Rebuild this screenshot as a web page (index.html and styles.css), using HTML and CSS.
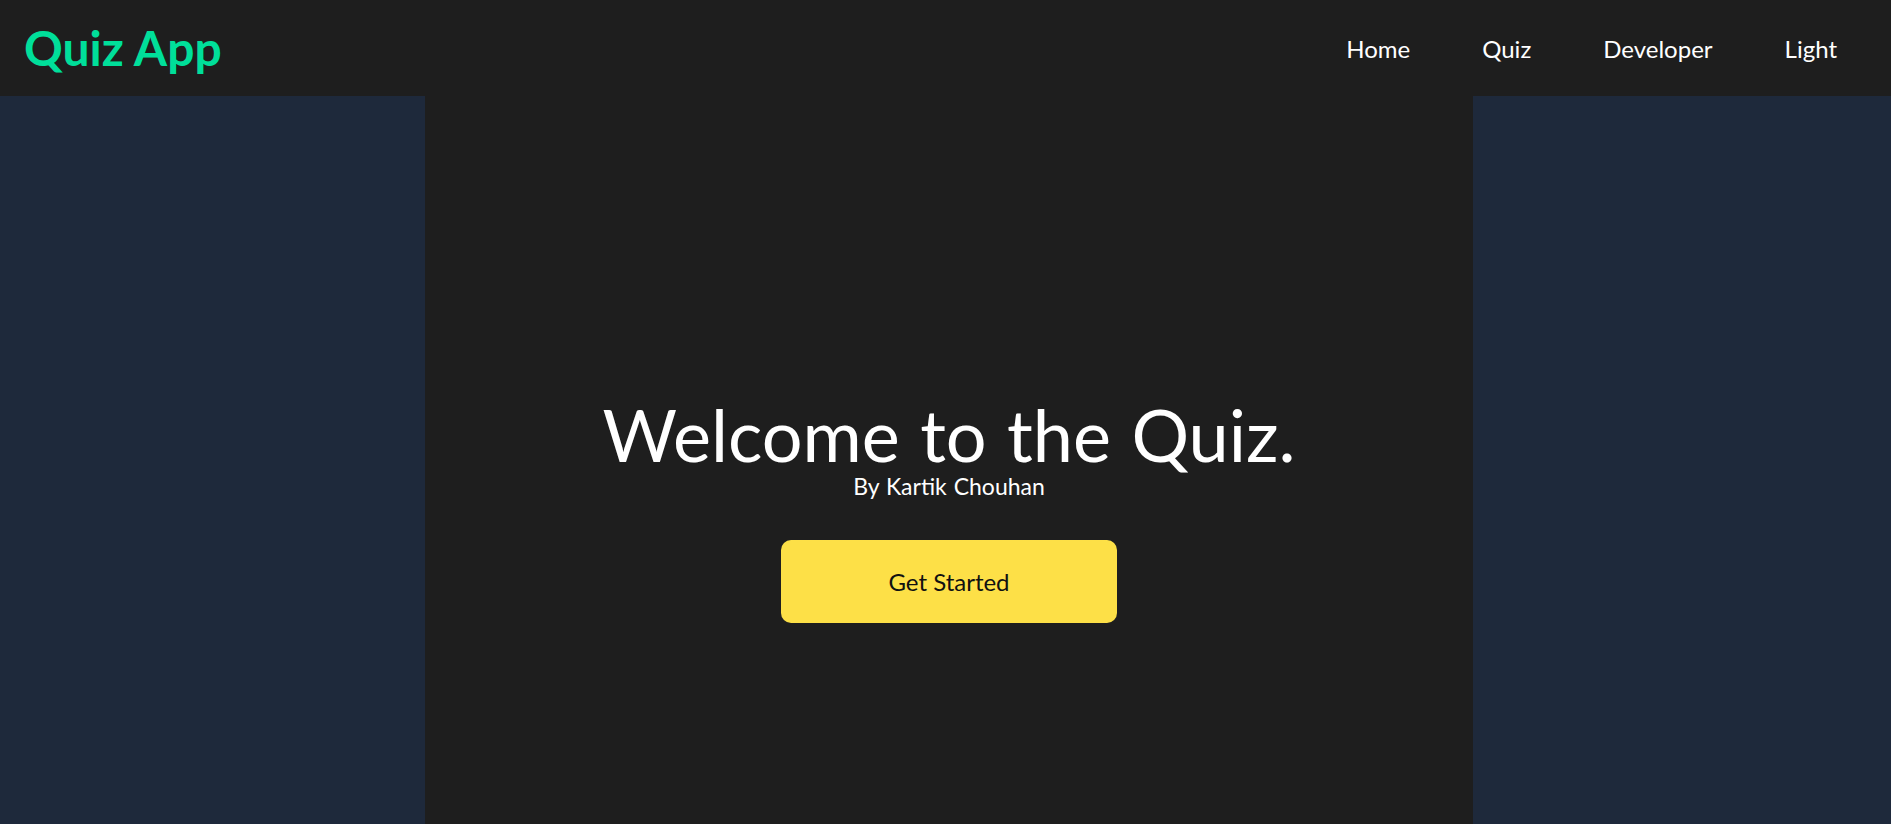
FILE: index.html
```html
<!DOCTYPE html>
<html lang="en">
<head>
<meta charset="utf-8">
<title>Quiz App</title>
<link rel="stylesheet" href="styles.css">
</head>
<body>
  <nav class="navbar">
    <h1 class="logo">Quiz App</h1>
    <ul class="nav-links">
      <li><a href="#">Home</a></li>
      <li><a href="#">Quiz</a></li>
      <li><a href="#">Developer</a></li>
      <li><a href="#">Light</a></li>
    </ul>
  </nav>
  <main class="page">
    <section class="hero">
      <h2 class="hero-title">Welcome to the Quiz.</h2>
      <p class="hero-author">By Kartik Chouhan</p>
      <button class="hero-button">Get Started</button>
    </section>
  </main>
</body>
</html>
```
FILE: styles.css
```css
* {
  box-sizing: border-box;
}

html, body {
  margin: 0;
  padding: 0;
}

body {
  background: #1e293b;
  font-family: Lato, "Open Sans", sans-serif;
  color: #ffffff;
  overflow: hidden;
}

.navbar {
  height: 96px;
  background: #1e1e1e;
  display: flex;
  align-items: center;
  justify-content: space-between;
  padding: 0 54px 0 24px;
}

.logo {
  margin: 0;
  font-size: 48px;
  line-height: 1;
  font-weight: 700;
  color: #00df9a;
}

.nav-links {
  list-style: none;
  margin: 0;
  padding: 0;
  display: flex;
  gap: 72px;
}

.nav-links a {
  color: #ffffff;
  text-decoration: none;
  font-size: 24px;
  line-height: 36px;
  display: block;
  padding-top: 2px;
}

.page {
  display: flex;
}

.hero {
  width: 1048px;
  margin-left: 425px;
  min-height: 100vh;
  background: #1e1e1e;
  display: flex;
  flex-direction: column;
  align-items: center;
  justify-content: center;
  padding-top: 5px;
}

.hero-title {
  margin: 0;
  font-size: 72px;
  line-height: 1;
  font-weight: 400;
  word-spacing: 2px;
}

.hero-author {
  margin: 0;
  font-size: 23px;
  line-height: 33px;
  word-spacing: 1px;
}

.hero-button {
  margin-top: 37px;
  width: 336px;
  height: 83px;
  border: none;
  border-radius: 10px;
  background: #fde047;
  color: #111111;
  font-family: Lato, "Open Sans", sans-serif;
  font-size: 24px;
  cursor: pointer;
}
```
